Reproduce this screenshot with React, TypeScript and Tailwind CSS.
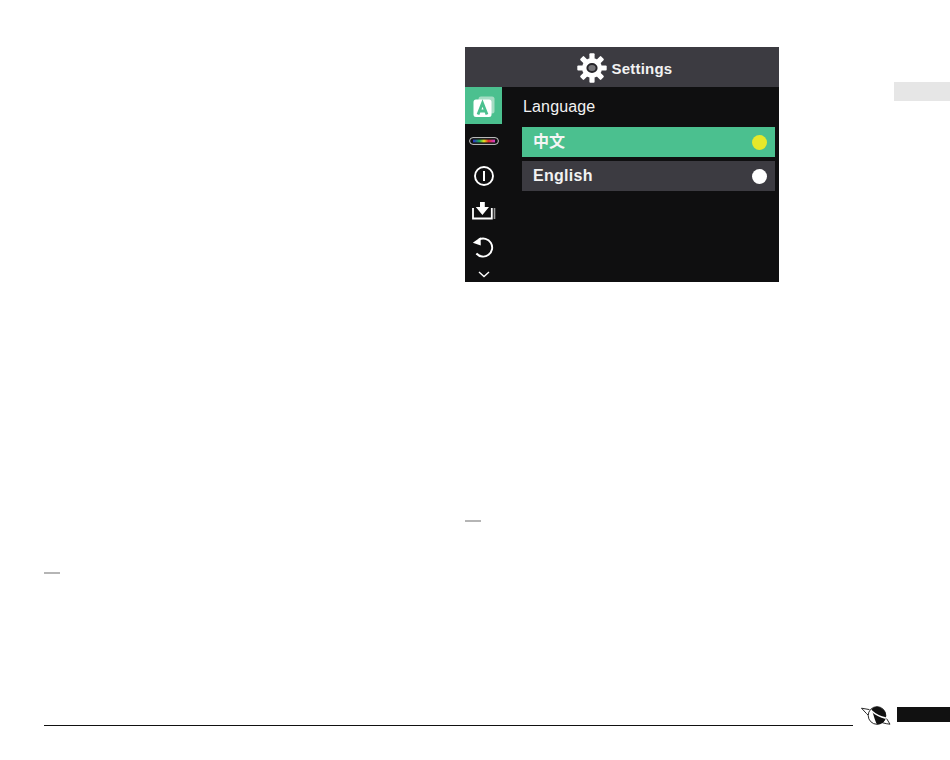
const font = "font-['Liberation_Sans','Noto_Sans_CJK_SC',sans-serif]";

function GearIcon() {
  const teeth = [0, 45, 90, 135, 180, 225, 270, 315];
  return (
    <svg width="30" height="30" viewBox="0 0 30 30">
      {teeth.map((a) => (
        <rect key={a} x="12.4" y="0.3" width="5.2" height="7" rx="1" fill="#fff" transform={`rotate(${a} 15 15)`} />
      ))}
      <circle cx="15" cy="15" r="10" fill="#fff" />
      <ellipse cx="15" cy="15" rx="4.6" ry="3.9" fill="#77767a" stroke="#26252a" strokeWidth="2" />
    </svg>
  );
}

function LanguageIcon() {
  return (
    <svg width="22" height="22" viewBox="0 0 22 22">
      <rect x="5.5" y="1.5" width="16" height="17" rx="2.5" fill="#a5dcc4" />
      <rect x="0.5" y="4.5" width="18" height="17.5" rx="2.5" fill="#fff" />
      <path d="M5 19.5 9.5 8 14 19.5M6.8 16h5.4" fill="none" stroke="#4bc08f" strokeWidth="2.8" />
    </svg>
  );
}

function ColorBarIcon() {
  return (
    <svg width="30" height="8" viewBox="0 0 30 8">
      <defs>
        <linearGradient id="bar" x1="0" x2="1" y1="0" y2="0">
          <stop offset="0" stopColor="#2b2bd0" />
          <stop offset="0.3" stopColor="#22b04c" />
          <stop offset="0.5" stopColor="#e8e020" />
          <stop offset="0.7" stopColor="#e02a2a" />
          <stop offset="1" stopColor="#d040d0" />
        </linearGradient>
      </defs>
      <rect x="0.6" y="0.6" width="28.8" height="6.8" rx="3.4" fill="#111" stroke="#ccc" strokeWidth="1" />
      <rect x="4" y="2.6" width="22" height="2.8" fill="url(#bar)" />
    </svg>
  );
}

function PowerIcon() {
  return (
    <svg width="22" height="22" viewBox="0 0 22 22" fill="none" stroke="#fff">
      <circle cx="11" cy="11" r="9" strokeWidth="1.9" />
      <path d="M11 6v10" strokeWidth="2" />
    </svg>
  );
}

function SaveIcon() {
  return (
    <svg width="24" height="18" viewBox="0 0 24 18">
      <path d="M1 6v10.5h18.8V6" fill="none" stroke="#fff" strokeWidth="1.8" />
      <path d="M8 0h4.8v5H17l-6.6 8-6.6-8H8z" fill="#fff" />
      <path d="M22.5 6v11" stroke="#999" strokeWidth="1.6" />
    </svg>
  );
}

function ResetIcon() {
  return (
    <svg width="24" height="22" viewBox="0 0 24 22" fill="none">
      <path d="M7 3.6A9 9 0 1 1 4.4 17.5" stroke="#fff" strokeWidth="1.9" />
      <path d="M0.8 6.8 8.6 1.2 8.8 9.6z" fill="#fff" />
    </svg>
  );
}

function PlanetLogo() {
  return (
    <svg width="32" height="22" viewBox="0 0 32 22" fill="none">
      <path d="M9.5 4.6 1.5 3.2l5 5.4c5 5 13.5 9.6 23.5 10.6l-3.4-5.6" stroke="#111" strokeWidth="0.9" />
      <circle cx="17" cy="10.5" r="8.8" fill="#fff" stroke="#111" strokeWidth="0.9" />
      <path d="M11.5 4a8.8 8.8 0 0 1 14.2 8.4C25 17 21.5 19.2 17 19.2c-2-3-3.5-10-5.5-15.2z" fill="#111" />
      <path d="M11 5.5c4 3.6 9 6.4 14.8 7.6" stroke="#fff" strokeWidth="1.6" />
    </svg>
  );
}

const railItems = [
  { id: "bar", icon: <ColorBarIcon />, h: "h-[34px]" },
  { id: "power", icon: <PowerIcon />, h: "h-[36px]" },
  { id: "save", icon: <SaveIcon />, h: "h-[34px]" },
  { id: "reset", icon: <ResetIcon />, h: "h-[38px]" },
];

export default function App() {
  return (
    <div className={`w-[950px] h-[760px] bg-white flex flex-col overflow-hidden ${font}`}>
      <div className="flex h-[705px] shrink-0">
        {/* left page column */}
        <div className="w-[465px] shrink-0 pl-[44px] pt-[572px]">
          <div className="w-[16px] h-[2px] bg-[#b5b5b5]" />
        </div>

        {/* device screen */}
        <div className="w-[314px] shrink-0 pt-[47px]">
          <div className="h-[235px] bg-[#0f0f10] flex flex-col">
            <div className="h-[40px] bg-[#3c3b41] flex items-center justify-center gap-[5px] pl-[5px] pt-[2px]">
              <GearIcon />
              <span className="text-[15px] font-bold text-[#f2f2f2] tracking-[0.2px] mt-[2px]">Settings</span>
            </div>
            <div className="flex flex-1">
              <div className="w-[37px] shrink-0 flex flex-col items-center">
                <div className="w-full h-[37px] bg-[#4bc08f] flex items-center justify-center">
                  <LanguageIcon />
                </div>
                {railItems.map((item) => (
                  <div key={item.id} className={`w-full flex items-center justify-center ${item.h}`}>
                    {item.icon}
                  </div>
                ))}
                <svg width="12" height="7" viewBox="0 0 12 7" fill="none" className="mt-[5px]">
                  <path d="M1 1l5 4.5L11 1" stroke="#fff" strokeWidth="1.4" />
                </svg>
              </div>
              <div className="flex-1 pl-[20px] pr-[4px]">
                <div className="h-[40px] pl-[1px] pb-[1px] flex items-center text-[16px] text-[#f2f2f2] tracking-[0.15px]">
                  Language
                </div>
                <div className="flex flex-col gap-[4px]">
                  <div className="h-[30px] bg-[#4bc08f] flex items-center justify-between pl-[11px] pr-[8px]">
                    <span className="text-[16px] font-bold text-[#f5f5f5]">中文</span>
                    <span className="w-[15px] h-[15px] rounded-full bg-[#e6e82a]" />
                  </div>
                  <div className="h-[30px] bg-[#3c3b41] flex items-center justify-between pl-[11px] pr-[8px]">
                    <span className="text-[16px] font-bold text-[#f2f2f2] tracking-[0.3px]">English</span>
                    <span className="w-[15px] h-[15px] rounded-full bg-white" />
                  </div>
                </div>
              </div>
            </div>
          </div>
          <div className="w-[16px] h-[2px] mt-[238px] bg-[#b5b5b5]" />
        </div>

        {/* chapter tab */}
        <div className="flex-1 pt-[82px] flex justify-end">
          <div className="w-[56px] h-[19px] bg-[#e6e6e6]" />
        </div>
      </div>

      {/* footer */}
      <div className="flex items-end h-[22px] pl-[44px]">
        <div className="w-[809px] h-px bg-[#111] mb-[1px]" />
        <div className="ml-[7px] w-[32px] shrink-0">
          <PlanetLogo />
        </div>
        <div className="ml-[5px] flex-1 h-[15px] bg-[#111] mb-[5px]" />
      </div>
    </div>
  );
}
